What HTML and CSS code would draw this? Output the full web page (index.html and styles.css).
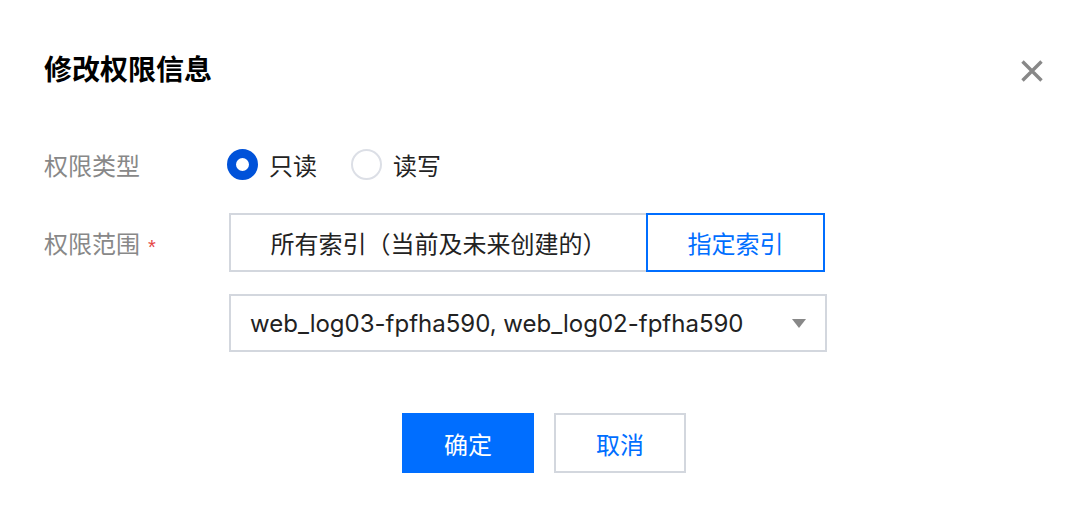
FILE: index.html
```html
<!DOCTYPE html>
<html lang="zh-CN">
<head>
<meta charset="utf-8">
<title>修改权限信息</title>
<link rel="stylesheet" href="styles.css">
</head>
<body>
<div class="dialog">
  <div class="header">
    <h1 class="title">修改权限信息</h1>
    <button class="close" aria-label="关闭">
      <svg width="24" height="24" viewBox="0 0 24 24"><path d="M2.5 2.5 L21.5 21.5 M21.5 2.5 L2.5 21.5" stroke="#888" stroke-width="3.4" fill="none"/></svg>
    </button>
  </div>
  <div class="form">
    <div class="row row-radio">
      <div class="label">权限类型</div>
      <div class="control radios">
        <label class="radio checked"><span class="dot"></span><span>只读</span></label>
        <label class="radio"><span class="dot"></span><span>读写</span></label>
      </div>
    </div>
    <div class="row row-seg">
      <div class="label">权限范围<span class="req">*</span></div>
      <div class="control segment">
        <div class="seg seg-left">所有索引（当前及未来创建的）</div>
        <div class="seg seg-active">指定索引</div>
      </div>
    </div>
    <div class="row row-select">
      <div class="label"></div>
      <div class="control select">
        <span class="select-text">web_log03-fpfha590, web_log02-fpfha590</span>
        <span class="caret"></span>
      </div>
    </div>
  </div>
  <div class="footer">
    <button class="btn btn-primary">确定</button>
    <button class="btn btn-default">取消</button>
  </div>
</div>
</body>
</html>
```
FILE: styles.css
```css
html, body {
  margin: 0;
  padding: 0;
  background: #fff;
}
body {
  font-family: "Noto Sans CJK SC", "Noto Sans", sans-serif;
  color: #222;
}
.dialog {
  width: 1088px;
  height: 520px;
  box-sizing: border-box;
  padding: 48px 44px 0 44px;
}
.header {
  display: flex;
  justify-content: space-between;
  align-items: center;
  height: 40px;
}
.title {
  margin: 0;
  font-size: 28px;
  line-height: 40px;
  font-weight: 700;
  color: #000;
}
.close {
  border: 0;
  background: none;
  padding: 0;
  width: 24px;
  height: 24px;
  display: flex;
  margin-top: 6px;
}
.form {
  margin-top: 60px;
}
.row {
  display: flex;
  align-items: center;
}
.label {
  width: 185px;
  flex: none;
  font-size: 24px;
  color: #888;
  display: flex;
  align-items: center;
}
.req {
  font-family: "Liberation Sans", sans-serif;
  color: #e54545;
  font-size: 20px;
  margin-left: 8px;
  line-height: 1;
  position: relative;
  top: 4px;
}
.row-radio {
  height: 32px;
}
.radios {
  display: flex;
  align-items: center;
  gap: 34px;
  margin-left: -2px;
}
.radio {
  display: flex;
  align-items: center;
  gap: 11px;
  font-size: 24px;
  color: #222;
}
.dot {
  width: 31px;
  height: 31px;
  box-sizing: border-box;
  border-radius: 50%;
  border: 2px solid #dcdfe6;
  background: #fff;
}
.radio.checked .dot {
  border: 9.5px solid #0052d9;
}
.row-seg {
  margin-top: 33px;
}
.segment {
  display: flex;
  height: 59px;
}
.seg {
  box-sizing: border-box;
  height: 59px;
  display: flex;
  align-items: center;
  justify-content: center;
  font-size: 24px;
}
.seg-left {
  width: 417px;
  border: 2px solid #d3d7de;
  border-right: 0;
  color: #222;
}
.seg-active {
  width: 179px;
  border: 2px solid #006eff;
  color: #006eff;
}
.row-select {
  margin-top: 22px;
}
.select {
  width: 598px;
  height: 58px;
  box-sizing: border-box;
  border: 2px solid #d3d7de;
  display: flex;
  align-items: center;
  justify-content: space-between;
  padding: 0 19px 0 19px;
}
.select-text {
  font-family: "Inter", "Liberation Sans", sans-serif;
  font-size: 24px;
  color: #222;
}
.caret {
  width: 0;
  height: 0;
  border-left: 7px solid transparent;
  border-right: 7px solid transparent;
  border-top: 9px solid #888;
}
.footer {
  display: flex;
  justify-content: center;
  gap: 20px;
  margin-top: 61px;
}
.btn {
  width: 132px;
  height: 60px;
  box-sizing: border-box;
  font-family: "Noto Sans CJK SC", sans-serif;
  font-size: 24px;
  border: 2px solid transparent;
  padding: 0;
  cursor: pointer;
}
.btn-primary {
  background: #006eff;
  border-color: #006eff;
  color: #fff;
}
.btn-default {
  background: #fff;
  border-color: #d3d7de;
  color: #006eff;
}
```
